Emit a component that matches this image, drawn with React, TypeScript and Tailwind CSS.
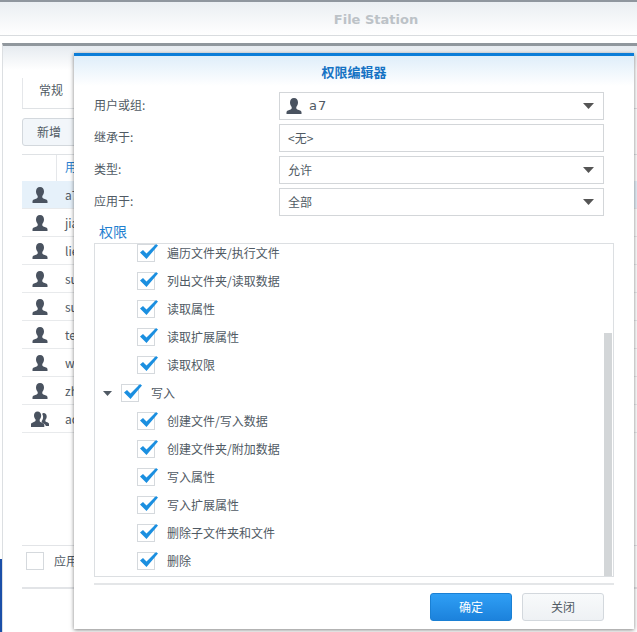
import React from 'react';

const cjk = { fontFamily: '"Noto Sans CJK SC", "Liberation Sans", sans-serif' };

const PersonIcon = ({ group = false }: { group?: boolean }) => (
  <svg width="18" height="18" viewBox="0 0 18 18" fill="#4a5360">
    {group ? (
      <>
        <path d="M12.500 3c2 0 3.200 1.500 3.200 3.400 0 1.400-.6 2.700-1.300 3.500v1c0 .7.800 1 1.800 1.400.9.400 1.800.8 1.800 1.700V16h-3.200c-.2-1.500-1.500-2.200-2.800-2.700-.8-.3-1.300-.6-1.300-1.100V11c.8-1 1.400-2.600 1.400-4.100 0-1.300-.4-2.400-1-3.200.6-.5 1.300-.7 1.400-.7z" />
        <path d="M6.500 1.500c2.400 0 3.700 1.800 3.700 4 0 1.700-.7 3.100-1.500 4.100v1.500c0 .8 1 1.200 2.300 1.700 1.200.5 2.300 1 2.300 2V17H0v-2.700c0-1 1.100-1.500 2.300-2 1.300-.5 2.300-.9 2.300-1.700V9.600C3.800 8.600 3 7.200 3 5.500c0-2.200 1.200-4 3.500-4z" />
      </>
    ) : (
      <path d="M9 1c2.600 0 4 1.900 4 4.400 0 1.800-.8 3.400-1.700 4.500v1.400c0 .8 1.100 1.200 2.600 1.800 1.400.5 2.600 1 2.600 2.100V17H1.500v-1.800c0-1.100 1.200-1.600 2.600-2.100 1.500-.6 2.600-1 2.600-1.800V9.900C5.800 8.800 5 7.200 5 5.400 5 2.900 6.400 1 9 1z" />
    )}
  </svg>
);

const Caret = () => (
  <svg width="11" height="6" viewBox="0 0 11 6" className="shrink-0">
    <path d="M0 0h11L5.500 6z" fill="#555" />
  </svg>
);

const Check = () => (
  <span className="relative block w-[18px] h-[18px] shrink-0 border border-[#d5d9dd] bg-white">
    <svg width="20" height="18" viewBox="0 0 20 18" className="absolute left-[1px] top-[-2px]">
      <path d="M1 9.500l3-2.500 3.500 3.500L17 1l2 1.500L7.500 16z" fill="#1b8fe0" />
    </svg>
  </span>
);

const FormRow = ({ label, children }: { label: string; children: React.ReactNode }) => (
  <div className="flex items-center h-[28px]">
    <div className="w-[185px] pb-[2px] text-[12px] text-[#505a64]">{label}</div>
    <div className="w-[325px] h-[28px] border border-[#d3d6d9] bg-white flex items-center pl-2 pr-[9px] text-[12px] text-[#505a64]">
      {children}
    </div>
  </div>
);

const TreeItem = ({ label }: { label: string }) => (
  <div className="flex items-center h-[28px] pl-[42px]">
    <Check />
    <span className="ml-[12px] text-[12px] text-[#505a64]">{label}</span>
  </div>
);

const users = ['a7', 'jiang', 'lieu', 'su01', 'su02', 'test', 'wang', 'zhao', 'admin'];

export default function App() {
  return (
    <div className="relative w-[637px] h-[632px] overflow-hidden bg-white" style={cjk}>
      {/* File Station window behind */}
      <div className="h-[36px] border-b border-[#d9dcdf] border-t-2 border-t-[#8f969e] bg-gradient-to-b from-[#eaeef2] to-white flex items-center justify-center pt-[2px] pl-[115px]">
        <span className="text-[13px] font-bold text-[#bcc2c7]" style={{ fontFamily: '"DejaVu Sans", sans-serif' }}>
          File Station
        </span>
      </div>

      <div className="absolute left-0 bottom-0 w-[2px] h-[73px] bg-[#1b4fa8]" />

      {/* Shared folder properties window */}
      <div className="absolute left-[2px] top-[43px] right-0 bottom-0 bg-white border-t-[3px] border-t-[#90979d] border-l border-l-[#dcdfe2]">
        <div className="h-[24px] bg-gradient-to-b from-[#e6ebf0] to-white" />
        <div className="ml-[19px]">
          <div className="h-[39px] border-b border-[#dfe2e5] flex items-end">
            <span className="pl-[16px] text-[12px] text-[#505a64] border-l border-[#e5e7ea] h-[30px] leading-[24px]">常规</span>
          </div>
          <div className="mt-[9px] h-[28px] w-[80px] border border-[#d3d8dd] rounded-[3px] bg-[#f2f6fa] pl-[14px] text-[12px] leading-[26px] text-[#505a64]">
            新增
          </div>
          <div className="mt-[8px] h-[27px] border-t border-[#dfe2e5] flex">
            <span className="ml-[34px] pl-[8px] border-l border-[#e5e7ea] text-[12px] leading-[24px] text-[#2a7fd0]">用户</span>
          </div>
          {users.map((name, i) => (
            <div
              key={name}
              className={`flex items-center h-[28px] border-b border-[#e8eaec] ${i === 0 ? 'bg-[#e6f1fa]' : ''}`}
            >
              <span className="ml-[9px] w-[34px] shrink-0">
                <PersonIcon group={name === 'admin'} />
              </span>
              <span className="text-[12px] text-[#505a64]">{name}</span>
            </div>
          ))}
          <div className="mt-[112px] h-[44px] border-t border-[#e2e4e7] border-b-2 border-b-[#e2e4e7] flex items-start pt-[6px] pl-[4px]">
            <span className="w-[18px] h-[18px] border border-[#d5d9dd]" />
            <span className="ml-[10px] text-[12px] leading-[18px] text-[#505a64]">应用到子文件夹</span>
          </div>
        </div>
      </div>

      {/* Permission editor dialog */}
      <div className="absolute left-[74px] top-[53px] w-[560px] h-[576px] bg-white border-t-[3px] border-t-[#0b7dd8] shadow-[0_1px_4px_rgba(0,0,0,0.5)] flex flex-col">
        <div className="h-[30px] shrink-0 bg-gradient-to-b from-[#dfeefa] to-white flex items-center justify-center pt-[2px] text-[13px] font-bold text-[#1673c4]">
          权限编辑器
        </div>
        <div className="px-[20px] pt-[6px] flex flex-col gap-[4px]">
          <FormRow label="用户或组:">
            <span className="ml-[-3px]"><PersonIcon /></span>
            <span className="ml-[6px] text-[13px] tracking-[1px] flex-1" style={{ fontFamily: '"DejaVu Sans", sans-serif' }}>a7</span>
            <Caret />
          </FormRow>
          <FormRow label="继承于:">
            <span>&lt;无&gt;</span>
          </FormRow>
          <FormRow label="类型:">
            <span className="flex-1">允许</span>
            <Caret />
          </FormRow>
          <FormRow label="应用于:">
            <span className="flex-1">全部</span>
            <Caret />
          </FormRow>
        </div>
        <div className="ml-[25px] mt-[5px] h-[24px] text-[14px] leading-[20px] text-[#1f7fd0] mb-[-2px]">权限</div>
        <div className="relative ml-[20px] w-[520px] h-[334px] shrink-0 border border-[#dcdfe2] overflow-hidden">
          <div className="mt-[-5px]">
            <TreeItem label="遍历文件夹/执行文件" />
            <TreeItem label="列出文件夹/读取数据" />
            <TreeItem label="读取属性" />
            <TreeItem label="读取扩展属性" />
            <TreeItem label="读取权限" />
            <div className="flex items-center h-[28px] pl-[8px]">
              <svg width="9" height="5" viewBox="0 0 9 5" className="shrink-0">
                <path d="M0 0h9L4.500 5z" fill="#505a64" />
              </svg>
              <span className="ml-[9px]"><Check /></span>
              <span className="ml-[12px] text-[12px] text-[#505a64]">写入</span>
            </div>
            <TreeItem label="创建文件/写入数据" />
            <TreeItem label="创建文件夹/附加数据" />
            <TreeItem label="写入属性" />
            <TreeItem label="写入扩展属性" />
            <TreeItem label="删除子文件夹和文件" />
            <TreeItem label="删除" />
          </div>
          <div className="absolute right-[1px] bottom-0 w-[8px] h-[243px] bg-[#d3d6d8]" />
        </div>
        <div className="ml-[20px] w-[520px] mt-[6px] border-t-2 border-[#e4e6e8]" />
        <div className="flex justify-end gap-[10px] pr-[30px] pt-[8px]">
          <div className="w-[82px] h-[28px] rounded-[3px] border border-[#1a80d4] bg-gradient-to-b from-[#2f9ff5] to-[#1c82dc] text-center text-[12px] leading-[26px] text-white">
            确定
          </div>
          <div className="w-[82px] h-[28px] rounded-[3px] border border-[#d3d8dd] bg-gradient-to-b from-[#f8fafb] to-[#eef1f4] text-center text-[12px] leading-[26px] text-[#505a64]">
            关闭
          </div>
        </div>
      </div>
    </div>
  );
}
